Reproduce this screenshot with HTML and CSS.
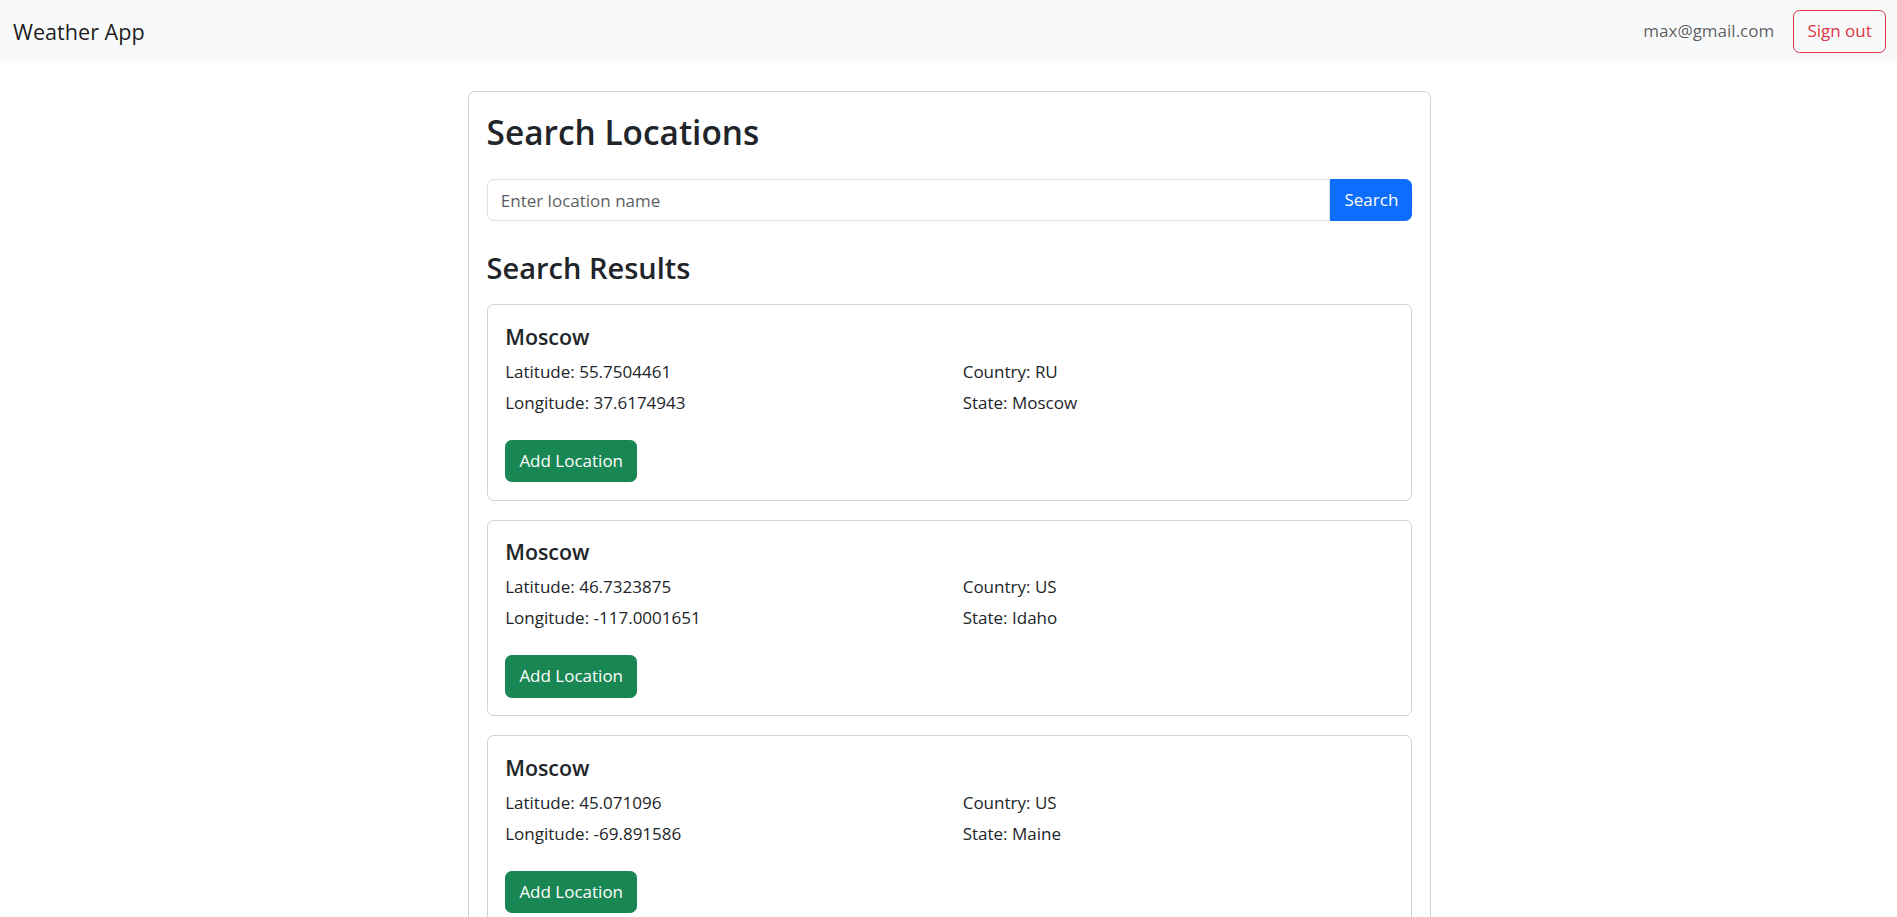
FILE: index.html
```html
<!DOCTYPE html>
<html lang="en">
<head>
<meta charset="utf-8">
<title>Weather App</title>
<link rel="stylesheet" href="styles.css">
</head>
<body>
<nav class="navbar">
  <a class="brand" href="#">Weather App</a>
  <div class="account">
    <span class="email">max@gmail.com</span>
    <button class="btn btn-outline-danger" type="button">Sign out</button>
  </div>
</nav>
<main class="page">
  <section class="panel">
    <h2 class="title">Search Locations</h2>
    <form class="search">
      <input class="search-input" type="text" placeholder="Enter location name">
      <button class="btn btn-primary search-btn" type="button">Search</button>
    </form>
    <h3 class="subtitle">Search Results</h3>
    <div class="results">
      <article class="result">
        <h5 class="result-name">Moscow</h5>
        <div class="result-grid">
          <div><p>Latitude: 55.7504461</p><p>Longitude: 37.6174943</p></div>
          <div><p>Country: RU</p><p>State: Moscow</p></div>
        </div>
        <button class="btn btn-success" type="button">Add Location</button>
      </article>
      <article class="result">
        <h5 class="result-name">Moscow</h5>
        <div class="result-grid">
          <div><p>Latitude: 46.7323875</p><p>Longitude: -117.0001651</p></div>
          <div><p>Country: US</p><p>State: Idaho</p></div>
        </div>
        <button class="btn btn-success" type="button">Add Location</button>
      </article>
      <article class="result">
        <h5 class="result-name">Moscow</h5>
        <div class="result-grid">
          <div><p>Latitude: 45.071096</p><p>Longitude: -69.891586</p></div>
          <div><p>Country: US</p><p>State: Maine</p></div>
        </div>
        <button class="btn btn-success" type="button">Add Location</button>
      </article>
    </div>
  </section>
</main>
</body>
</html>
```

FILE: styles.css
```css
* { box-sizing: border-box; }
html, body { margin: 0; padding: 0; }
body {
  font-family: "Open Sans", "Noto Sans", sans-serif;
  font-size: 17px;
  line-height: 26.4px;
  color: #212529;
  background: #fff;
}

.navbar {
  height: 63px;
  background: #f8f9fa;
  display: flex;
  align-items: center;
  justify-content: space-between;
  padding: 0 11px 0 13px;
}
.brand {
  font-size: 21.6px;
  line-height: 33px;
  color: rgba(0, 0, 0, 0.9);
  text-decoration: none;
}
.account {
  display: flex;
  align-items: center;
  gap: 19px;
}
.email { color: rgba(0, 0, 0, 0.65); }

.btn {
  font: inherit;
  line-height: 26.4px;
  padding: 7.1px 13.2px;
  border: 1px solid transparent;
  border-radius: 6.6px;
  cursor: pointer;
}
.btn-outline-danger { color: #dc3545; border-color: #dc3545; background: transparent; }
.btn-primary { color: #fff; background: #0d6efd; border-color: #0d6efd; }
.btn-success { color: #fff; background: #198754; border-color: #198754; }

.page { padding: 28px 0 0 2px; }
.panel {
  width: 963px;
  margin: 0 auto;
  border: 1px solid rgba(0, 0, 0, 0.175);
  border-radius: 6.6px;
  padding: 17.6px;
}
.title {
  font-size: 33.4px;
  font-weight: 600;
  line-height: 42.2px;
  padding-top: 1px;
  margin: 0 0 26px;
}
.search {
  display: flex;
  margin: 0 0 28.3px;
}
.search-input {
  flex: 1;
  min-width: 0;
  height: 42.7px;
  border: 1px solid #dee2e6;
  border-radius: 6.6px 0 0 6.6px;
  padding: 0 13.2px;
  font: inherit;
  color: #212529;
  outline: none;
}
.search-input::placeholder { color: rgba(33, 37, 41, 0.75); }
.search-btn {
  width: 82px;
  height: 42.7px;
  padding: 0;
  border-radius: 0 6.6px 6.6px 0;
}
.subtitle {
  font-size: 29px;
  font-weight: 600;
  line-height: 34.7px;
  padding-top: 1px;
  margin: 0 0 18.6px;
}
.results {
  display: flex;
  flex-direction: column;
  gap: 18.8px;
}
.result {
  border: 1px solid rgba(0, 0, 0, 0.175);
  border-radius: 6.6px;
  padding: 17.6px;
}
.result-name {
  font-size: 21.4px;
  font-weight: 600;
  line-height: 26.4px;
  padding-top: 1px;
  margin: 0 0 7.8px;
}
.result-grid {
  display: grid;
  grid-template-columns: 1fr 1fr;
  column-gap: 26.4px;
  margin-bottom: 20.2px;
}
.result-grid p { margin: 0 0 3.4px; padding-top: 1px; }
```
